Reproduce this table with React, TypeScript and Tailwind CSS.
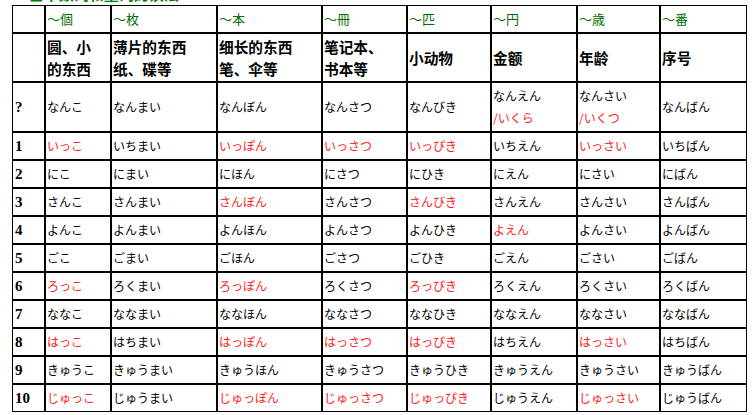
const counters = ['～個', '～枚', '～本', '～冊', '～匹', '～円', '～歳', '～番'];

const uses = [
  ['圆、小', '的东西'],
  ['薄片的东西', '纸、碟等'],
  ['细长的东西', '笔、伞等'],
  ['笔记本、', '书本等'],
  ['小动物'],
  ['金额'],
  ['年龄'],
  ['序号'],
];

// 前面带 * 的是特殊读法（红字）
const rows = [
  ['1', '*いっこ', 'いちまい', '*いっぽん', '*いっさつ', '*いっぴき', 'いちえん', '*いっさい', 'いちばん'],
  ['2', 'にこ', 'にまい', 'にほん', 'にさつ', 'にひき', 'にえん', 'にさい', 'にばん'],
  ['3', 'さんこ', 'さんまい', '*さんぼん', 'さんさつ', '*さんびき', 'さんえん', 'さんさい', 'さんばん'],
  ['4', 'よんこ', 'よんまい', 'よんほん', 'よんさつ', 'よんひき', '*よえん', 'よんさい', 'よんばん'],
  ['5', 'ごこ', 'ごまい', 'ごほん', 'ごさつ', 'ごひき', 'ごえん', 'ごさい', 'ごばん'],
  ['6', '*ろっこ', 'ろくまい', '*ろっぽん', 'ろくさつ', '*ろっぴき', 'ろくえん', 'ろくさい', 'ろくばん'],
  ['7', 'ななこ', 'ななまい', 'ななほん', 'ななさつ', 'ななひき', 'ななえん', 'ななさい', 'ななばん'],
  ['8', '*はっこ', 'はちまい', '*はっぽん', '*はっさつ', '*はっぴき', 'はちえん', '*はっさい', 'はちばん'],
  ['9', 'きゅうこ', 'きゅうまい', 'きゅうほん', 'きゅうさつ', 'きゅうひき', 'きゅうえん', 'きゅうさい', 'きゅうばん'],
  ['10', '*じゅっこ', 'じゅうまい', '*じゅっぽん', '*じゅっさつ', '*じゅっぴき', 'じゅうえん', '*じゅっさい', 'じゅうばん'],
];

const widths = ['w-[33px]', 'w-[66px]', 'w-[106px]', 'w-[105px]', 'w-[85px]', 'w-[84px]', 'w-[86px]', 'w-[83px]', 'w-[87px]'];

const jp = "font-['Noto_Sans_CJK_JP',sans-serif]";
const cell = 'border border-black px-[1px] align-middle text-left';
const num = "font-['Liberation_Serif','Noto_Sans_CJK_SC',serif] font-bold text-[15px] pl-[2px]";

export default function App() {
  return (
    <div className="w-[752px] h-[415px] bg-white overflow-hidden">
      {/* 被截掉的标题 */}
      <div className="h-[5px] overflow-hidden pl-[15px]">
        <div className="-mt-[15px] text-[15px] leading-[18px] font-bold text-[#008000] font-['Noto_Sans_CJK_SC',sans-serif]">
          3.基本数词和量词的读法
        </div>
      </div>

      <table className="ml-[12px] w-[735px] table-fixed border-separate border-spacing-0 text-black">
        <colgroup>
          {widths.map((w, i) => (
            <col key={i} className={w} />
          ))}
        </colgroup>
        <tbody>
          <tr className="h-[28px]">
            <td className={cell}></td>
            {counters.map((c) => (
              <td key={c} className={`${cell} ${jp} text-[13px] text-[#007000]`}>
                {c}
              </td>
            ))}
          </tr>

          <tr className="h-[49px]">
            <td className={cell}></td>
            {uses.map((u, i) => (
              <td key={i} className={`${cell} font-['Noto_Sans_CJK_SC',sans-serif] font-bold text-[14.67px] leading-[22px]`}>
                {u.map((line, j) => (
                  <div key={j}>{line}</div>
                ))}
              </td>
            ))}
          </tr>

          <tr className="h-[50px]">
            <td className={`${cell} ${num}`}>?</td>
            <td className={`${cell} ${jp} text-[12px]`}>なんこ</td>
            <td className={`${cell} ${jp} text-[12px]`}>なんまい</td>
            <td className={`${cell} ${jp} text-[12px]`}>なんぼん</td>
            <td className={`${cell} ${jp} text-[12px]`}>なんさつ</td>
            <td className={`${cell} ${jp} text-[12px]`}>なんびき</td>
            <td className={`${cell} ${jp} text-[12px] leading-[22px]`}>
              <div>なんえん</div>
              <div className="text-[#ff2020]">/いくら</div>
            </td>
            <td className={`${cell} ${jp} text-[12px] leading-[22px]`}>
              <div>なんさい</div>
              <div className="text-[#ff2020]">/いくつ</div>
            </td>
            <td className={`${cell} ${jp} text-[12px]`}>なんばん</td>
          </tr>

          {rows.map((r) => (
            <tr key={r[0]} className="h-[28px]">
              <td className={`${cell} ${num}`}>{r[0]}</td>
              {r.slice(1).map((w, i) => (
                <td
                  key={i}
                  className={`${cell} ${jp} text-[12px] ${w.startsWith('*') ? 'text-[#ff2020]' : ''}`}
                >
                  {w.replace('*', '')}
                </td>
              ))}
            </tr>
          ))}
        </tbody>
      </table>
    </div>
  );
}
